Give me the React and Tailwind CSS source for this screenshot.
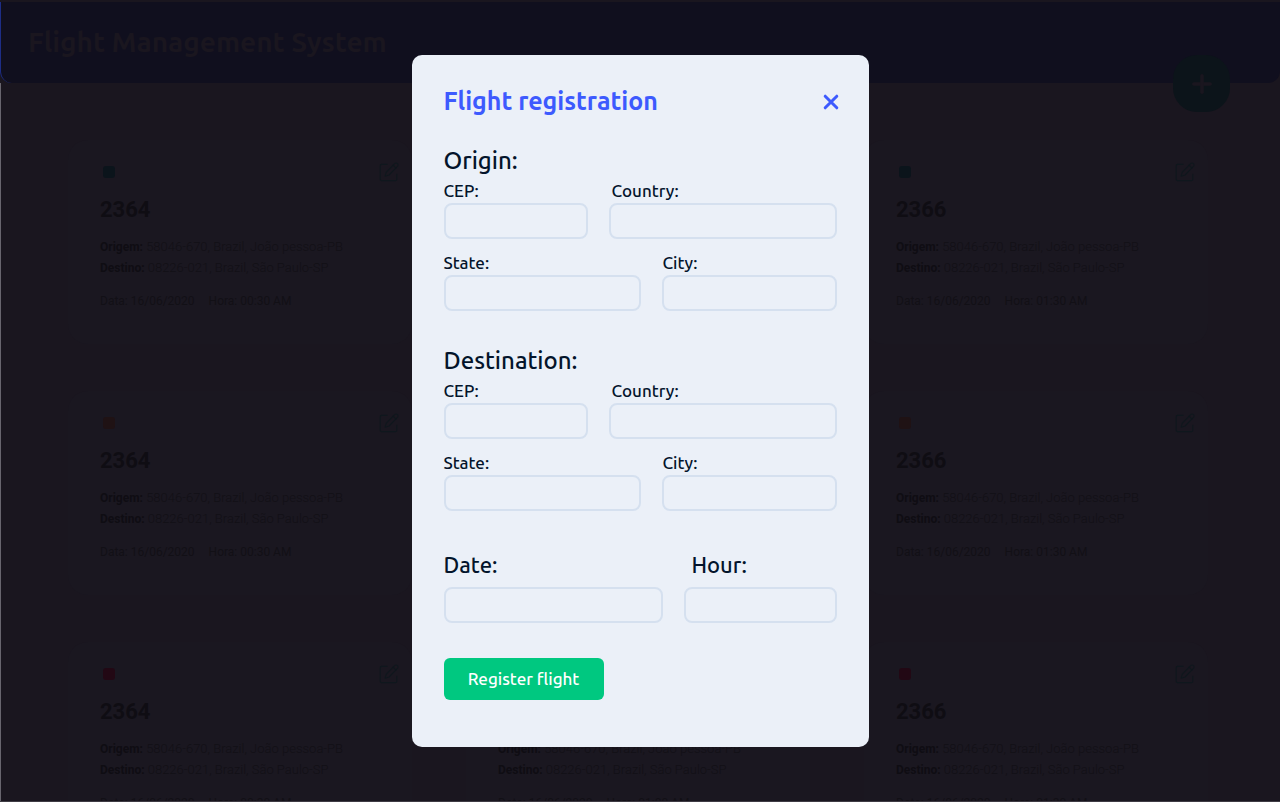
import React from "react";
import { Plus } from "lucide-react";

const STATUS = {
  onTime: "bg-[#0b141b]",
  delayed: "bg-[#1f1214]",
  cancelled: "bg-[#220814]",
};

const COLUMNS = [
  { number: "2364", hour: "00:30 AM" },
  { number: "2365", hour: "01:00 AM" },
  { number: "2366", hour: "01:30 AM" },
];

const FLIGHTS = ["onTime", "delayed", "cancelled"].flatMap((status) =>
  COLUMNS.map((column) => ({ ...column, status }))
);

function EditIcon() {
  return (
    <svg
      viewBox="0 0 20 20"
      className="size-5"
      fill="none"
      stroke="currentColor"
      strokeWidth="1.1"
      strokeLinecap="round"
      strokeLinejoin="round"
      aria-hidden="true"
    >
      <path d="M8 2.400H2.600A1.400 1.400 0 0 0 1.200 3.800v13.400A1.400 1.400 0 0 0 2.600 18.600h13.800a1.400 1.400 0 0 0 1.400-1.400v-5" />
      <path d="M15.700 1.700a1.900 1.900 0 0 1 2.700 2.700l-8.300 8.600-4 1.200 1.200-4z" />
      <path d="M14.200 3.300l2.700 2.700" />
    </svg>
  );
}

function RouteLine({ label, children }) {
  return (
    <p className="text-[13px] font-light leading-[21px]">
      <strong className="text-[12px] font-bold leading-none text-[#0f0d13]">{label}</strong> {children}
    </p>
  );
}

function FlightCard({ number, hour, status }) {
  return (
    <article className="h-[204px] rounded-[20px] bg-[#1a1720] pl-8 pr-[13px] pt-[22px] text-[#121016]">
      <div className="flex items-center justify-between pl-[3px]">
        <span className={`size-3 rounded-[3px] ${STATUS[status]}`} />
        <button type="button" aria-label={`Edit flight ${number}`} className="text-[#0f171d]">
          <EditIcon />
        </button>
      </div>
      <h2 className="mb-3 mt-3.5 text-[22px] font-bold leading-7 text-[#0f0d13]">{number}</h2>
      <RouteLine label="Origem:">58046-670, Brazil, João pessoa-PB</RouteLine>
      <RouteLine label="Destino:">08226-021, Brazil, São Paulo-SP</RouteLine>
      <p className="mt-[13px] flex gap-3.5 text-[12px] leading-[21px]">
        <span>Data: 16/06/2020</span>
        <span>Hora: {hour}</span>
      </p>
    </article>
  );
}

const LABEL_SIZES = {
  small: "text-[17px] font-medium leading-6",
  large: "pb-2 text-[22px] font-medium leading-7",
};

function Field({ id, label, width, size = "small", inset = "" }) {
  return (
    <div className={`flex flex-col ${width}`}>
      <label htmlFor={id} className={`${LABEL_SIZES[size]} ${inset}`}>
        {label}
      </label>
      <input
        id={id}
        type="text"
        className="h-9 w-full rounded-lg border-2 border-[#d5e0ef] bg-transparent px-3 text-base outline-none focus:border-[#3d5afe]"
      />
    </div>
  );
}

function AddressFields({ legend, prefix }) {
  return (
    <fieldset>
      <legend className="text-[24px] font-medium leading-8">{legend}</legend>
      <div className="mt-0.5 flex justify-between">
        <Field id={`${prefix}-cep`} label="CEP:" width="w-[144px]" />
        <Field id={`${prefix}-country`} label="Country:" width="w-[228px]" inset="pl-[3px]" />
      </div>
      <div className="mt-3 flex justify-between">
        <Field id={`${prefix}-state`} label="State:" width="w-[197px]" />
        <Field id={`${prefix}-city`} label="City:" width="w-[175px]" inset="pl-px" />
      </div>
    </fieldset>
  );
}

function RegistrationDialog() {
  return (
    <div className="fixed inset-0 flex items-center justify-center">
      <section
        role="dialog"
        aria-modal="true"
        aria-labelledby="dialog-title"
        className="w-[457px] rounded-[10px] bg-[#ebf0f8] px-8 pb-[47px] pt-7 font-['Ubuntu','Noto_Sans',sans-serif] text-[#03142b]"
      >
        <header className="flex items-center justify-between">
          <h1 id="dialog-title" className="text-[25px] font-bold leading-9 text-[#3d5afe]">
            Flight registration
          </h1>
          <button type="button" aria-label="Close" className="-mr-0.5 pt-0.5 text-[#3d5afe]">
            <svg viewBox="0 0 16 16" className="size-4" stroke="currentColor" strokeWidth="3" strokeLinecap="round" aria-hidden="true">
              <path d="M2.200 2.200l11.600 11.600M13.800 2.200L2.200 13.800" />
            </svg>
          </button>
        </header>
        <form className="mt-[26px]" onSubmit={(event) => event.preventDefault()}>
          <AddressFields legend="Origin:" prefix="origin" />
          <div className="mt-[34px]">
            <AddressFields legend="Destination:" prefix="destination" />
          </div>
          <div className="mt-10 flex justify-between">
            <Field id="date" label="Date:" width="w-[219px]" size="large" />
            <Field id="hour" label="Hour:" width="w-[153px]" size="large" inset="pl-2" />
          </div>
          <button
            type="submit"
            className="mt-[35px] h-[42px] w-40 rounded-md bg-[#00c880] text-[17px] font-medium text-white"
          >
            Register flight
          </button>
        </form>
      </section>
    </div>
  );
}

export default function App() {
  return (
    <div className="flex h-screen flex-col overflow-hidden border-b border-[#3f3c44] bg-[#1a161f] pt-0.5 font-['Roboto',sans-serif]">
      <header className="relative flex h-[81px] shrink-0 items-center rounded-b-xl border-l border-[#1d2d85] bg-[#100f1e] pb-0.5 pl-[27px]">
        <p className="font-['Ubuntu','Noto_Sans',sans-serif] text-[28px] font-bold leading-9 text-[#1a161f]">
          Flight Management System
        </p>
        <button
          type="button"
          aria-label="Add flight"
          className="absolute -bottom-[29px] right-[50px] flex size-[57px] items-center justify-center rounded-[24px] bg-[#0c141a] text-[#1a161f]"
        >
          <Plus size={28} strokeWidth={3} />
        </button>
      </header>
      <main className="min-h-0 grow overflow-hidden border-l border-[#68656e] pl-[67px] pr-[72px] pt-[57px]">
        <div className="grid grid-cols-3 gap-x-[54px] gap-y-[47px]">
          {FLIGHTS.map((flight) => (
            <FlightCard key={`${flight.status}-${flight.number}`} {...flight} />
          ))}
        </div>
      </main>
      <RegistrationDialog />
    </div>
  );
}
